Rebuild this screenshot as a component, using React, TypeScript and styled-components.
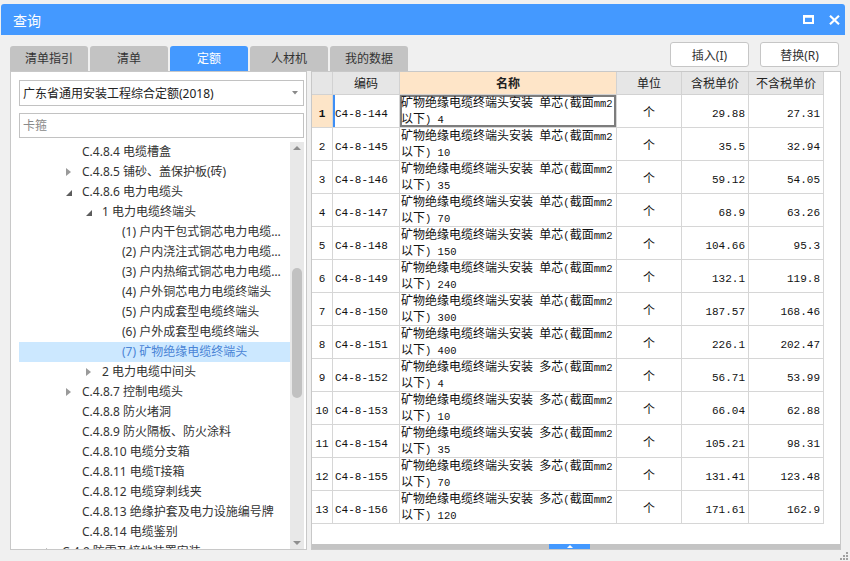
import React from 'react';
import styled, { createGlobalStyle } from 'styled-components';

const UI_FONT = `"Noto Sans", "Noto Sans CJK SC", sans-serif`;
const MONO_FONT = `"Liberation Mono", "Noto Sans CJK SC", monospace`;

const GlobalStyle = createGlobalStyle`
  html, body {
    margin: 0;
    padding: 0;
    background: #f0f0f0;
  }
  body {
    font-family: ${UI_FONT};
    font-size: 12px;
    color: #333;
  }
  * {
    box-sizing: border-box;
  }
`;

const Window = styled.div`
  width: 850px;
  height: 561px;
  overflow: hidden;
  display: flex;
  flex-direction: column;
  background: #f0f0f0;
`;

const TitleBar = styled.div`
  flex: none;
  height: 31px;
  margin: 4px 5px 0 1px;
  padding: 0 5px 0 12px;
  display: flex;
  align-items: center;
  justify-content: space-between;
  background: #4499ff;
  color: #fff;
  font-size: 14px;
  border-radius: 3px 3px 0 0;
`;

const TitleIcons = styled.div`
  display: flex;
  align-items: center;
  gap: 15px;
`;

const TopRow = styled.div`
  flex: none;
  height: 36px;
  padding: 0 11px 0 10px;
  display: flex;
  justify-content: space-between;
`;

const Tabs = styled.div`
  display: flex;
  gap: 2px;
  align-self: flex-end;
`;

const Tab = styled.div<{ $active?: boolean }>`
  width: 78px;
  height: 25px;
  line-height: 25px;
  text-align: center;
  border-radius: 3px 3px 0 0;
  background: ${(p) => (p.$active ? '#4499ff' : '#c3c3c3')};
  color: ${(p) => (p.$active ? '#fff' : '#333')};
`;

const Actions = styled.div`
  display: flex;
  gap: 11px;
  padding-top: 7px;
`;

const ActionButton = styled.button`
  width: 79px;
  height: 25px;
  padding: 0;
  background: #fff;
  border: 1px solid #c6c6c6;
  border-radius: 3px;
  font-family: ${UI_FONT};
  font-size: 12px;
  color: #333;
`;

const Main = styled.div`
  flex: none;
  height: 479px;
  padding: 0 9px 0 10px;
  display: flex;
  gap: 4px;
`;

const LeftPanel = styled.div`
  flex: none;
  width: 297px;
  padding: 8px 2px 0 8px;
  display: flex;
  flex-direction: column;
  background: #fff;
  border: 1px solid #c8c8c8;
`;

const Select = styled.div`
  flex: none;
  height: 26px;
  padding: 0 5px 0 3px;
  display: flex;
  align-items: center;
  justify-content: space-between;
  border: 1px solid #c2c2c2;
  color: #222;
`;

const SearchBox = styled.input`
  flex: none;
  height: 25px;
  margin-top: 7px;
  padding: 0 3px;
  border: 1px solid #c2c2c2;
  outline: none;
  font-family: ${UI_FONT};
  font-size: 12px;
  color: #333;

  &::placeholder {
    color: #8a8a8a;
  }
`;

const Tree = styled.div`
  flex: 1;
  min-height: 0;
  margin-top: 4px;
  display: flex;
`;

const TreeList = styled.div`
  flex: 1;
  min-width: 0;
  overflow: hidden;
`;

const TreeRow = styled.div<{ $level: number; $selected?: boolean }>`
  height: 20px;
  padding-left: ${(p) => 27 + p.$level * 20}px;
  display: flex;
  align-items: center;
  background: ${(p) => (p.$selected ? '#cce8ff' : 'transparent')};
  color: ${(p) => (p.$selected ? '#4a84d6' : '#333')};
`;

const Toggle = styled.span`
  flex: none;
  width: 16px;
  display: flex;
  align-items: center;
`;

const Label = styled.span`
  min-width: 0;
  padding-right: 4px;
  white-space: nowrap;
  overflow: hidden;
  text-overflow: ellipsis;
  line-height: 20px;
`;

const VScroll = styled.div`
  flex: none;
  width: 14px;
  display: flex;
  flex-direction: column;
  background: #e8e8e8;
`;

const ScrollArrow = styled.div`
  flex: none;
  height: 12px;
  display: flex;
  align-items: center;
  justify-content: center;
`;

const VTrack = styled.div`
  flex: 1;
  display: flex;
  justify-content: center;
`;

const VThumb = styled.div`
  width: 10px;
  height: 130px;
  margin-top: 114px;
  border-radius: 5px;
  background: #c1c1c1;
`;

const RightPanel = styled.div`
  flex: 1;
  min-width: 0;
  display: flex;
  flex-direction: column;
  background: #fff;
  border: 1px solid #c8c8c8;
`;

const GridArea = styled.div`
  flex: 1;
  min-height: 0;
  overflow: hidden;
`;

const Grid = styled.table`
  width: 512px;
  table-layout: fixed;
  border-collapse: separate;
  border-spacing: 0;
  font-family: "Noto Sans CJK SC", sans-serif;
  font-size: 12px;
  color: #111;
`;

const HeadCell = styled.th<{ $accent?: boolean }>`
  height: 23px;
  padding: 0;
  border-right: 1px solid #d2d2d2;
  border-bottom: 1px solid #d2d2d2;
  background: ${(p) => (p.$accent ? '#fee5c8' : '#e6e6e6')};
  font-family: ${UI_FONT};
  font-size: 12px;
  font-weight: ${(p) => (p.$accent ? 'bold' : 'normal')};
  color: #222;
  text-align: center;
`;

const Cell = styled.td`
  height: 33px;
  padding: 0;
  border-right: 1px solid #d6d6d6;
  border-bottom: 1px solid #d6d6d6;
  vertical-align: middle;
`;

const NumCell = styled(Cell)<{ $current?: boolean }>`
  text-align: center;
  background: ${(p) => (p.$current ? '#fde5c8' : '#fff')};
  font-weight: ${(p) => (p.$current ? 'bold' : 'normal')};
`;

const CodeCell = styled(Cell)<{ $current?: boolean }>`
  padding-left: 2px;
  box-shadow: ${(p) => (p.$current ? 'inset 2px 0 0 #3d8ef5' : 'none')};
`;

const NameCell = styled(Cell)<{ $focused?: boolean }>`
  padding: 0 0 0 1px;
  line-height: 14px;
  white-space: nowrap;
  overflow: hidden;
  box-shadow: ${(p) => (p.$focused ? 'inset 0 0 0 2px #7d7d7d' : 'none')};
`;

const UnitCell = styled(Cell)`
  text-align: center;
`;

const PriceCell = styled(Cell)`
  padding-right: 3px;
  text-align: right;
`;

const Latin = styled.span<{ $narrow?: boolean }>`
  font-family: ${MONO_FONT};
  font-size: ${(p) => (p.$narrow ? '10.5px' : '11px')};
`;

const HScroll = styled.div`
  flex: none;
  height: 5px;
  display: flex;
  background: #c4c4c4;
`;

const HThumb = styled.div`
  width: 41px;
  margin-left: 237px;
  display: flex;
  align-items: center;
  justify-content: center;
  background: #4499ff;
`;

const Footer = styled.div`
  flex: 1;
  padding: 0 2px 2px 0;
  display: flex;
  justify-content: flex-end;
  align-items: flex-end;
`;

type TreeItem = {
  level: number;
  text: string;
  toggle?: 'open' | 'closed';
  selected?: boolean;
};

const treeItems: TreeItem[] = [
  { level: 1, text: 'C.4.8.4 电缆槽盒' },
  { level: 1, text: 'C.4.8.5 铺砂、盖保护板(砖)', toggle: 'closed' },
  { level: 1, text: 'C.4.8.6 电力电缆头', toggle: 'open' },
  { level: 2, text: '1 电力电缆终端头', toggle: 'open' },
  { level: 3, text: '(1) 户内干包式铜芯电力电缆终端头' },
  { level: 3, text: '(2) 户内浇注式铜芯电力电缆终端头' },
  { level: 3, text: '(3) 户内热缩式铜芯电力电缆终端头' },
  { level: 3, text: '(4) 户外铜芯电力电缆终端头' },
  { level: 3, text: '(5) 户内成套型电缆终端头' },
  { level: 3, text: '(6) 户外成套型电缆终端头' },
  { level: 3, text: '(7) 矿物绝缘电缆终端头', selected: true },
  { level: 2, text: '2 电力电缆中间头', toggle: 'closed' },
  { level: 1, text: 'C.4.8.7 控制电缆头', toggle: 'closed' },
  { level: 1, text: 'C.4.8.8 防火堵洞' },
  { level: 1, text: 'C.4.8.9 防火隔板、防火涂料' },
  { level: 1, text: 'C.4.8.10 电缆分支箱' },
  { level: 1, text: 'C.4.8.11 电缆T接箱' },
  { level: 1, text: 'C.4.8.12 电缆穿刺线夹' },
  { level: 1, text: 'C.4.8.13 绝缘护套及电力设施编号牌' },
  { level: 1, text: 'C.4.8.14 电缆鉴别' },
  { level: 0, text: 'C.4.9 防雷及接地装置安装', toggle: 'closed' },
];

// code, core type, section, price with tax, price without tax
const rows: [string, string, string, string, string][] = [
  ['C4-8-144', '单芯', '4', '29.88', '27.31'],
  ['C4-8-145', '单芯', '10', '35.5', '32.94'],
  ['C4-8-146', '单芯', '35', '59.12', '54.05'],
  ['C4-8-147', '单芯', '70', '68.9', '63.26'],
  ['C4-8-148', '单芯', '150', '104.66', '95.3'],
  ['C4-8-149', '单芯', '240', '132.1', '119.8'],
  ['C4-8-150', '单芯', '300', '187.57', '168.46'],
  ['C4-8-151', '单芯', '400', '226.1', '202.47'],
  ['C4-8-152', '多芯', '4', '56.71', '53.99'],
  ['C4-8-153', '多芯', '10', '66.04', '62.88'],
  ['C4-8-154', '多芯', '35', '105.21', '98.31'],
  ['C4-8-155', '多芯', '70', '131.41', '123.48'],
  ['C4-8-156', '多芯', '120', '171.61', '162.9'],
];

// wrap ascii runs so they get the narrow mono face
const mixed = (text: string) =>
  text.split(/([\x00-\x7F]+)/).map((part, i) =>
    /^[\x00-\x7F]+$/.test(part) ? (
      <Latin key={i} $narrow>
        {part}
      </Latin>
    ) : (
      part
    )
  );

const TreeToggle = ({ state }: { state?: 'open' | 'closed' }) => {
  if (state === 'closed') {
    return (
      <svg width="5" height="8" viewBox="0 0 5 8">
        <path d="M0 0 L5 4 L0 8 Z" fill="#9a9a9a" />
      </svg>
    );
  }
  if (state === 'open') {
    return (
      <svg width="6" height="6" viewBox="0 0 6 6" style={{ marginTop: 2 }}>
        <path d="M6 0 L6 6 L0 6 Z" fill="#5c5c5c" />
      </svg>
    );
  }
  return null;
};

export default function App() {
  return (
    <Window>
      <GlobalStyle />
      <TitleBar>
        <span>查询</span>
        <TitleIcons>
          <svg width="11" height="9" viewBox="0 0 11 9">
            <rect x="1" y="1.5" width="9" height="6.5" fill="none" stroke="#fff" strokeWidth="2" />
            <rect x="0" y="0" width="11" height="2.5" fill="#fff" />
          </svg>
          <svg width="11" height="10" viewBox="0 0 11 10">
            <path d="M1 0.8 L10 9.2 M10 0.8 L1 9.2" stroke="#fff" strokeWidth="2.2" />
          </svg>
        </TitleIcons>
      </TitleBar>

      <TopRow>
        <Tabs>
          <Tab>清单指引</Tab>
          <Tab>清单</Tab>
          <Tab $active>定额</Tab>
          <Tab>人材机</Tab>
          <Tab>我的数据</Tab>
        </Tabs>
        <Actions>
          <ActionButton>插入(I)</ActionButton>
          <ActionButton>替换(R)</ActionButton>
        </Actions>
      </TopRow>

      <Main>
        <LeftPanel>
          <Select>
            <span>广东省通用安装工程综合定额(2018)</span>
            <svg width="6" height="4" viewBox="0 0 6 4">
              <path d="M0 0 L6 0 L3 3.5 Z" fill="#8a8a8a" />
            </svg>
          </Select>
          <SearchBox placeholder="卡箍" />
          <Tree>
            <TreeList>
              {treeItems.map((item, index) => (
                <TreeRow key={index} $level={item.level} $selected={item.selected}>
                  <Toggle>
                    <TreeToggle state={item.toggle} />
                  </Toggle>
                  <Label>{item.text}</Label>
                </TreeRow>
              ))}
            </TreeList>
            <VScroll>
              <ScrollArrow>
                <svg width="8" height="4" viewBox="0 0 8 4">
                  <path d="M0 4 L4 0 L8 4 Z" fill="#8f8f8f" />
                </svg>
              </ScrollArrow>
              <VTrack>
                <VThumb />
              </VTrack>
              <ScrollArrow>
                <svg width="8" height="4" viewBox="0 0 8 4">
                  <path d="M0 0 L8 0 L4 4 Z" fill="#8f8f8f" />
                </svg>
              </ScrollArrow>
            </VScroll>
          </Tree>
        </LeftPanel>

        <RightPanel>
          <GridArea>
            <Grid>
              <colgroup>
                <col style={{ width: 21 }} />
                <col style={{ width: 67 }} />
                <col style={{ width: 217 }} />
                <col style={{ width: 65 }} />
                <col style={{ width: 67 }} />
                <col style={{ width: 75 }} />
              </colgroup>
              <thead>
                <tr>
                  <HeadCell />
                  <HeadCell>编码</HeadCell>
                  <HeadCell $accent>名称</HeadCell>
                  <HeadCell>单位</HeadCell>
                  <HeadCell>含税单价</HeadCell>
                  <HeadCell>不含税单价</HeadCell>
                </tr>
              </thead>
              <tbody>
                {rows.map(([code, core, size, withTax, noTax], index) => {
                  const current = index === 0;
                  return (
                    <tr key={code}>
                      <NumCell $current={current}>
                        <Latin>{index + 1}</Latin>
                      </NumCell>
                      <CodeCell $current={current}>
                        <Latin>{code}</Latin>
                      </CodeCell>
                      <NameCell $focused={current}>
                        {mixed(`矿物绝缘电缆终端头安装 ${core}(截面mm2`)}
                        <br />
                        {mixed(`以下) ${size}`)}
                      </NameCell>
                      <UnitCell>个</UnitCell>
                      <PriceCell>
                        <Latin>{withTax}</Latin>
                      </PriceCell>
                      <PriceCell>
                        <Latin>{noTax}</Latin>
                      </PriceCell>
                    </tr>
                  );
                })}
              </tbody>
            </Grid>
          </GridArea>
          <HScroll>
            <HThumb>
              <svg width="6" height="3" viewBox="0 0 6 3">
                <path d="M0 3 L3 0 L6 3 Z" fill="#fff" />
              </svg>
            </HThumb>
          </HScroll>
        </RightPanel>
      </Main>

      <Footer>
        <svg width="10" height="10" viewBox="0 0 10 10">
          <rect x="8" y="2" width="2" height="2" fill="#a0a0a0" />
          <rect x="5" y="5" width="2" height="2" fill="#a0a0a0" />
          <rect x="8" y="5" width="2" height="2" fill="#a0a0a0" />
          <rect x="2" y="8" width="2" height="2" fill="#a0a0a0" />
          <rect x="5" y="8" width="2" height="2" fill="#a0a0a0" />
          <rect x="8" y="8" width="2" height="2" fill="#a0a0a0" />
        </svg>
      </Footer>
    </Window>
  );
}
